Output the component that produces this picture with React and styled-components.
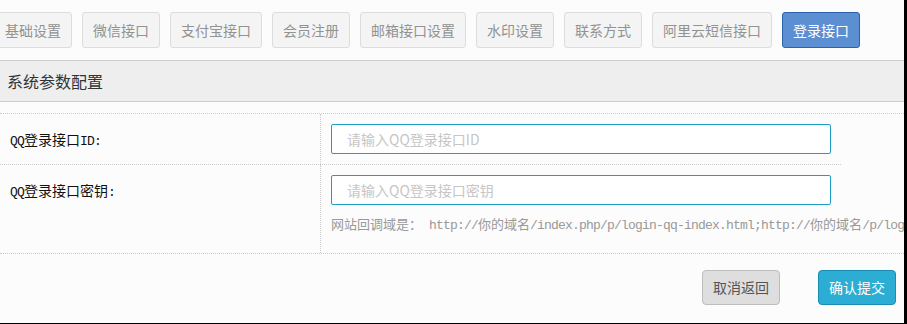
import styled, { createGlobalStyle } from "styled-components";

const GlobalStyle = createGlobalStyle`
	html,
	body {
		margin: 0;
		padding: 0;
		background: #000000;
	}
	body {
		font-family: "Noto Sans CJK SC", "Liberation Sans", sans-serif;
	}
`;

const Page = styled.div`
	width: 904px;
	height: 323px;
	overflow: hidden;
	background: #fcfcfc;
`;

const Tabs = styled.div`
	display: flex;
	gap: 10px;
	padding-top: 12px;
	margin-left: -6px;
`;

const Tab = styled.div`
	box-sizing: border-box;
	height: 36px;
	padding: 0 10px;
	border: 1px solid ${({ $active }) => ($active ? "#2c61ab" : "#dddddd")};
	border-radius: 3px;
	background: ${({ $active }) => ($active ? "#5b8fd2" : "#f4f4f4")};
	color: ${({ $active }) => ($active ? "#ffffff" : "#929292")};
	font-size: 14px;
	line-height: 34px;
	white-space: nowrap;
`;

const Header = styled.div`
	margin-top: 12px;
	height: 40px;
	border-top: 1px solid #cccccc;
	border-bottom: 1px solid #cccccc;
	background: #eeeeee;
	padding-left: 7px;
	font-size: 16px;
	line-height: 40px;
	color: #333333;
`;

const Form = styled.div`
	margin-top: 11px;
	border-top: 1px dotted #cccccc;
	border-bottom: 1px dotted #cccccc;
`;

const Row = styled.div`
	display: grid;
	grid-template-columns: 321px 520px;
	width: 841px;
	border-bottom: ${({ $divided }) => ($divided ? "1px dotted #cccccc" : "none")};
`;

const LabelCell = styled.div`
	border-right: 1px dotted #cccccc;
	padding: 10px;
	font-size: 14px;
	line-height: 30px;
	color: #111111;
	white-space: nowrap;
`;

const FieldCell = styled.div`
	padding: 10px;
	min-width: 0;
`;

/* latin runs: 7px advance like the reference's bitmap font */
const Mono = styled.span`
	font-family: "Liberation Mono", "DejaVu Sans Mono", monospace;
	font-size: 13px;
	font-weight: normal;
	letter-spacing: -0.8px;
	line-height: 1;
`;

const Input = styled.input`
	display: block;
	box-sizing: border-box;
	width: 500px;
	height: 30px;
	margin: 0;
	padding: 0 15px;
	border: 1px solid #1c9ec6;
	border-radius: 2px;
	background: #ffffff;
	font-family: "Noto Sans CJK SC", "Liberation Sans", sans-serif;
	font-size: 14px;
	color: #333333;
	outline: none;

	&::placeholder {
		color: #c6c6c6;
	}
`;

const Help = styled.div`
	margin: 9px 0;
	font-size: 13px;
	line-height: 20px;
	color: #999999;
	white-space: nowrap;
`;

const Footer = styled.div`
	display: flex;
	justify-content: flex-end;
	gap: 38px;
	padding: 16px 8px 0 0;
`;

const Button = styled.button`
	box-sizing: border-box;
	height: 35px;
	padding: 0 10px;
	border: 1px solid ${({ $primary }) => ($primary ? "#1a8db3" : "#bdbdbd")};
	border-radius: 4px;
	background: ${({ $primary }) => ($primary ? "#2cadd3" : "#dedede")};
	color: ${({ $primary }) => ($primary ? "#ffffff" : "#555555")};
	font-family: "Noto Sans CJK SC", "Liberation Sans", sans-serif;
	font-size: 14px;
	line-height: 33px;
	cursor: pointer;
`;

const tabs = [
	"基础设置",
	"微信接口",
	"支付宝接口",
	"会员注册",
	"邮箱接口设置",
	"水印设置",
	"联系方式",
	"阿里云短信接口",
	"登录接口",
];

const App = () => {
	return (
		<Page>
			<GlobalStyle />
			<Tabs>
				{tabs.map((name) => (
					<Tab key={name} $active={name === "登录接口"}>
						{name}
					</Tab>
				))}
			</Tabs>
			<Header>系统参数配置</Header>
			<Form>
				<Row $divided>
					<LabelCell>
						<Mono>QQ</Mono>登录接口<Mono>ID:</Mono>
					</LabelCell>
					<FieldCell>
						<Input placeholder="请输入QQ登录接口ID" />
					</FieldCell>
				</Row>
				<Row>
					<LabelCell>
						<Mono>QQ</Mono>登录接口密钥<Mono>:</Mono>
					</LabelCell>
					<FieldCell>
						<Input placeholder="请输入QQ登录接口密钥" />
						<Help>
							网站回调域是：<Mono>{"\u00a0http://"}</Mono>你的域名
							<Mono>/index.php/p/login-qq-index.html;http://</Mono>你的域名
							<Mono>/p/login-qq-index.html</Mono>
						</Help>
					</FieldCell>
				</Row>
			</Form>
			<Footer>
				<Button>取消返回</Button>
				<Button $primary>确认提交</Button>
			</Footer>
		</Page>
	);
};

export default App;
